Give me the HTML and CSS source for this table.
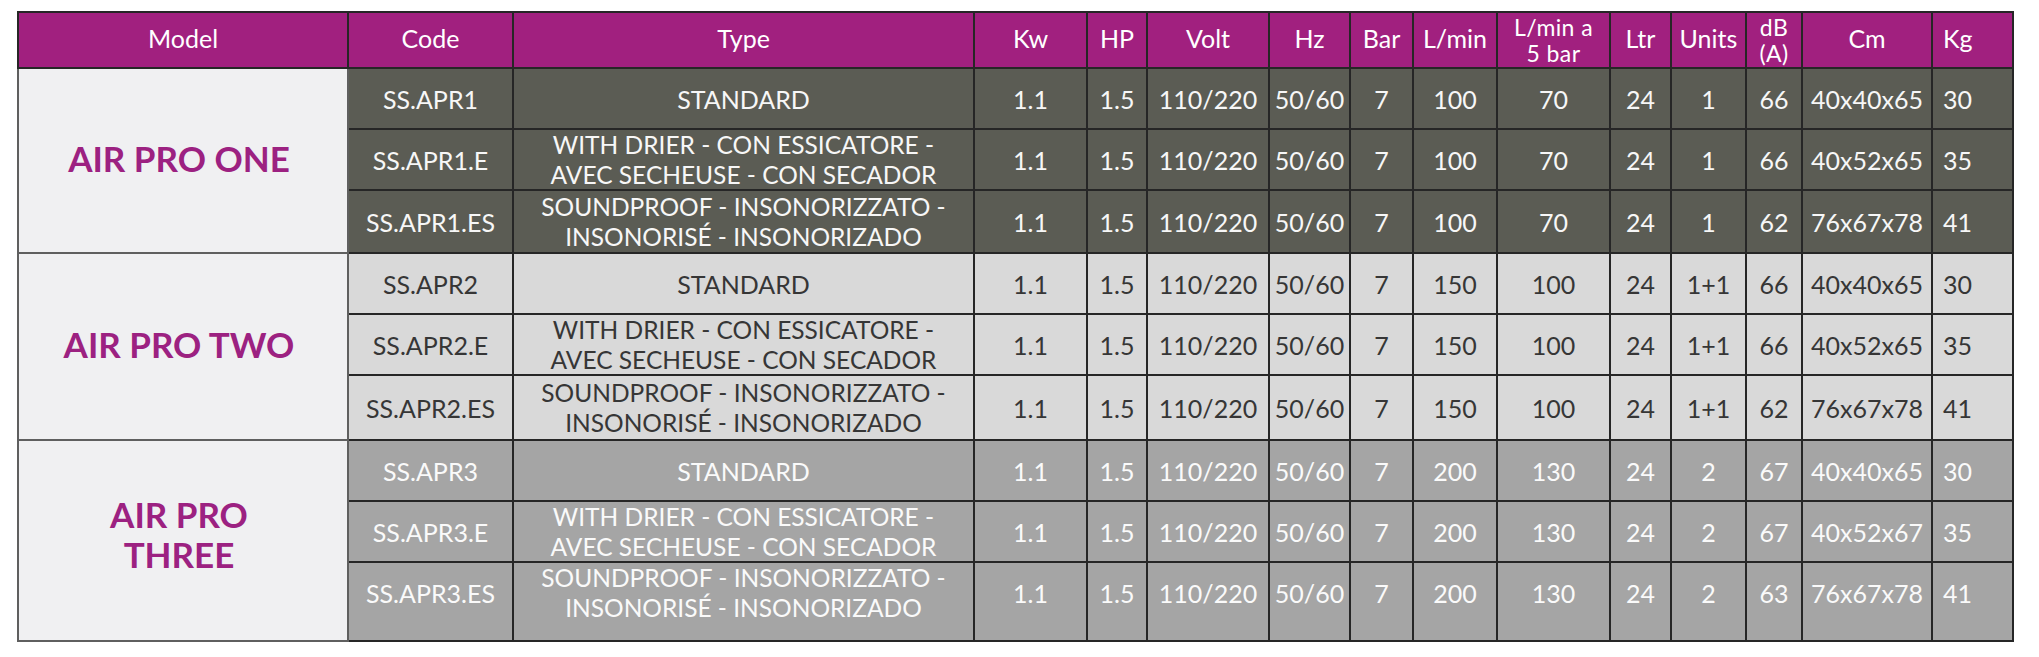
FILE: index.html
```html
<!DOCTYPE html>
<html lang="en">
<head>
  <meta charset="UTF-8" />
  <meta name="viewport" content="width=device-width, initial-scale=1.0" />
  <title>Air Pro - Specifications</title>
  <link rel="stylesheet" href="styles.css">
</head>
<body>
  <table class="specs">
    <colgroup>
      <col style="width:330px"><col style="width:165px"><col style="width:461px"><col style="width:113px">
      <col style="width:60px"><col style="width:122px"><col style="width:81px"><col style="width:63px">
      <col style="width:84px"><col style="width:113px"><col style="width:61px"><col style="width:75px">
      <col style="width:56px"><col style="width:130px"><col style="width:81px">
    </colgroup>
    <thead>
      <tr>
        <th>Model</th>
        <th>Code</th>
        <th>Type</th>
        <th>Kw</th>
        <th>HP</th>
        <th>Volt</th>
        <th>Hz</th>
        <th>Bar</th>
        <th>L/min</th>
        <th class="two-line">L/min a<br>5 bar</th>
        <th>Ltr</th>
        <th>Units</th>
        <th class="two-line">dB<br>(A)</th>
        <th>Cm</th>
        <th class="kg">Kg</th>
      </tr>
    </thead>

    <!-- AIR PRO ONE -->
    <tbody class="group-dark">
      <tr class="r1">
        <td class="model" rowspan="3">AIR PRO ONE</td>
        <td>SS.APR1</td>
        <td>STANDARD</td>
        <td>1.1</td><td>1.5</td><td>110/220</td><td>50/60</td><td>7</td>
        <td>100</td><td>70</td><td>24</td><td>1</td><td>66</td><td>40x40x65</td><td class="kg">30</td>
      </tr>
      <tr class="r2">
        <td>SS.APR1.E</td>
        <td class="two-line">WITH DRIER - CON ESSICATORE -<br>AVEC SECHEUSE - CON SECADOR</td>
        <td>1.1</td><td>1.5</td><td>110/220</td><td>50/60</td><td>7</td>
        <td>100</td><td>70</td><td>24</td><td>1</td><td>66</td><td>40x52x65</td><td class="kg">35</td>
      </tr>
      <tr class="r3">
        <td>SS.APR1.ES</td>
        <td class="two-line">SOUNDPROOF - INSONORIZZATO -<br>INSONORISÉ - INSONORIZADO</td>
        <td>1.1</td><td>1.5</td><td>110/220</td><td>50/60</td><td>7</td>
        <td>100</td><td>70</td><td>24</td><td>1</td><td>62</td><td>76x67x78</td><td class="kg">41</td>
      </tr>
    </tbody>

    <!-- AIR PRO TWO -->
    <tbody class="group-light">
      <tr class="r1">
        <td class="model" rowspan="3">AIR PRO TWO</td>
        <td>SS.APR2</td>
        <td>STANDARD</td>
        <td>1.1</td><td>1.5</td><td>110/220</td><td>50/60</td><td>7</td>
        <td>150</td><td>100</td><td>24</td><td>1+1</td><td>66</td><td>40x40x65</td><td class="kg">30</td>
      </tr>
      <tr class="r2">
        <td>SS.APR2.E</td>
        <td class="two-line">WITH DRIER - CON ESSICATORE -<br>AVEC SECHEUSE - CON SECADOR</td>
        <td>1.1</td><td>1.5</td><td>110/220</td><td>50/60</td><td>7</td>
        <td>150</td><td>100</td><td>24</td><td>1+1</td><td>66</td><td>40x52x65</td><td class="kg">35</td>
      </tr>
      <tr class="r3 tall">
        <td>SS.APR2.ES</td>
        <td class="two-line">SOUNDPROOF - INSONORIZZATO -<br>INSONORISÉ - INSONORIZADO</td>
        <td>1.1</td><td>1.5</td><td>110/220</td><td>50/60</td><td>7</td>
        <td>150</td><td>100</td><td>24</td><td>1+1</td><td>62</td><td>76x67x78</td><td class="kg">41</td>
      </tr>
    </tbody>

    <!-- AIR PRO THREE -->
    <tbody class="group-mid">
      <tr class="r1">
        <td class="model" rowspan="3">AIR PRO<br>THREE</td>
        <td>SS.APR3</td>
        <td>STANDARD</td>
        <td>1.1</td><td>1.5</td><td>110/220</td><td>50/60</td><td>7</td>
        <td>200</td><td>130</td><td>24</td><td>2</td><td>67</td><td>40x40x65</td><td class="kg">30</td>
      </tr>
      <tr class="r2">
        <td>SS.APR3.E</td>
        <td class="two-line">WITH DRIER - CON ESSICATORE -<br>AVEC SECHEUSE - CON SECADOR</td>
        <td>1.1</td><td>1.5</td><td>110/220</td><td>50/60</td><td>7</td>
        <td>200</td><td>130</td><td>24</td><td>2</td><td>67</td><td>40x52x67</td><td class="kg">35</td>
      </tr>
      <tr class="last">
        <td>SS.APR3.ES</td>
        <td class="two-line">SOUNDPROOF - INSONORIZZATO -<br>INSONORISÉ - INSONORIZADO</td>
        <td>1.1</td><td>1.5</td><td>110/220</td><td>50/60</td><td>7</td>
        <td>200</td><td>130</td><td>24</td><td>2</td><td>63</td><td>76x67x78</td><td class="kg">41</td>
      </tr>
    </tbody>
  </table>
</body>
</html>
```
FILE: styles.css
```css
*,
*::before,
*::after {
  box-sizing: border-box;
}

body {
  margin: 0;
  padding: 11px 0 0 17px;
  background-color: #fff;
  font-family: Lato, sans-serif;
}

.specs {
  border-collapse: collapse;
  table-layout: fixed;
  width: 1995px;
  font-size: 25px;
  line-height: 30px;
}

.specs th,
.specs td {
  border: 2px solid #262626;
  padding: 0;
  text-align: center;
  vertical-align: middle;
  white-space: nowrap;
}

.specs thead th {
  height: 56px;
  padding-bottom: 5px;
  background-color: #a1207f;
  color: #fff;
  font-weight: 400;
}

.specs thead .two-line {
  font-size: 23px;
  line-height: 26px;
  letter-spacing: 0.4px;
  padding-bottom: 0;
}

.specs tbody .two-line {
  font-size: 24.5px;
  line-height: 29.5px;
}

.specs .kg {
  text-align: left;
  padding-left: 10px;
}

/* row heights */
.r1,
.r2 {
  height: 61px;
}

.r3 {
  height: 63px;
}

.r3.tall {
  height: 65px;
}

.last {
  height: 79px;
}

.last td {
  padding-bottom: 18px;
}

/* groups */
.group-dark td {
  background-color: #5b5c54;
  color: #f7f7f7;
}

.group-light td {
  background-color: #d9d9d9;
  color: #363636;
}

.group-mid td {
  background-color: #a5a5a5;
  color: #fafafa;
}

.specs .model {
  padding: 0 8px 6px 0;
  background-color: #f0f0f2;
  color: #9c2181;
  font-size: 35px;
  font-weight: 700;
  line-height: 40px;
  white-space: normal;
  border-color: #5f5f5f;
}

.specs .group-mid .model {
  padding-bottom: 14px;
}
```
